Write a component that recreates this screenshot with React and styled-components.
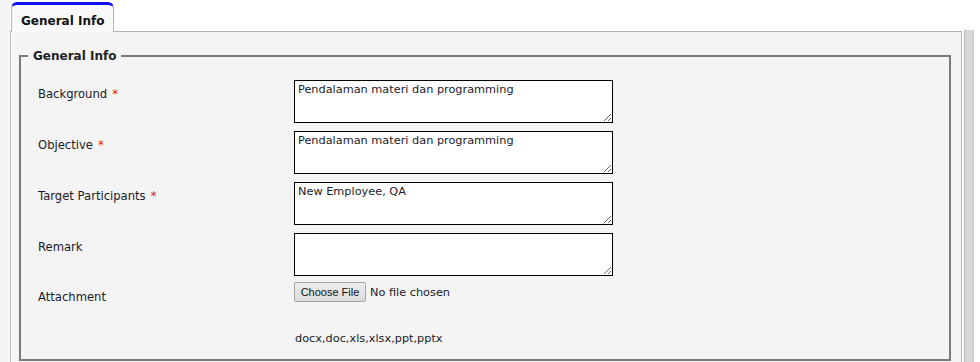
import React from "react";
import styled, { createGlobalStyle } from "styled-components";

const GlobalStyle = createGlobalStyle`
  html, body {
    margin: 0;
    padding: 0;
    background: #ffffff;
    font-family: "DejaVu Sans", Verdana, sans-serif;
    font-size: 11px;
    color: #1a1a1a;
    overflow: hidden;
  }
`;

const FIELDS = [
  { id: "bg", label: "Background", required: true, value: "Pendalaman materi dan programming" },
  { id: "obj", label: "Objective", required: true, value: "Pendalaman materi dan programming" },
  { id: "tp", label: "Target Participants", required: true, value: "New Employee, QA" },
  { id: "rm", label: "Remark", required: false, value: "" },
];

const App = () => {
  return (
    <>
      <GlobalStyle />
      <Page>
        <Gutter />
        <Main>
          <TabBar>
            <Tab $active>General Info</Tab>
          </TabBar>
          <Panel>
            <Fieldset>
              <Legend>General Info</Legend>
              <FormGrid>
                {FIELDS.map((f) => (
                  <React.Fragment key={f.id}>
                    <Label htmlFor={f.id}>
                      {f.label}
                      {f.required && <Req>*</Req>}
                    </Label>
                    <TextArea id={f.id} defaultValue={f.value} />
                  </React.Fragment>
                ))}
                <Label $file>Attachment</Label>
                <FileCell>
                  <FileRow>
                    <FileButton type="button">Choose File</FileButton>
                    <FileName>No file chosen</FileName>
                  </FileRow>
                  <Hint>docx,doc,xls,xlsx,ppt,pptx</Hint>
                </FileCell>
              </FormGrid>
            </Fieldset>
          </Panel>
        </Main>
        <Scrollbar>
          <Track />
        </Scrollbar>
      </Page>
    </>
  );
};

const Page = styled.div`
  display: flex;
  height: 362px;
  background: #ffffff;
`;

const Gutter = styled.div`
  width: 10px;
  background: #f4f4f4;
`;

const Main = styled.div`
  width: 952px;
  display: flex;
  flex-direction: column;
`;

const TabBar = styled.div`
  height: 32px;
  display: flex;
  align-items: flex-end;
  padding-left: 1px;
  border-bottom: 1px solid #b4b4b4;
  background: #ffffff;
  box-sizing: border-box;
`;

const Tab = styled.div`
  width: 103px;
  height: 30px;
  margin-bottom: -1px;
  box-sizing: border-box;
  border: 1px solid #b4b4b4;
  border-top: 3px solid #1010f0;
  border-bottom: none;
  border-radius: 6px 6px 0 0;
  background: ${(p) => (p.$active ? "#f9f9f9" : "#e8e8e8")};
  font-weight: bold;
  font-size: 12px;
  color: #111;
  padding: 9px 0 0 9px;
`;

const Panel = styled.div`
  flex: 1;
  background: #f4f4f4;
  border-left: 1px solid #c4c4c4;
  border-right: 1px solid #b4b4b4;
  padding: 17px 10px 0 8px;
`;

const Fieldset = styled.fieldset`
  margin: 0;
  border: 2px solid #7a7a7a;
  padding: 17px 0 14px 17px;
  width: 932px;
  box-sizing: border-box;
`;

const Legend = styled.legend`
  font-weight: bold;
  font-size: 12px;
  color: #222;
  padding: 0 5px;
  margin-left: -10px;
`;

const FormGrid = styled.div`
  display: grid;
  grid-template-columns: 256px 319px;
  row-gap: 8px;
`;

const Label = styled.label`
  padding-top: ${(p) => (p.$file ? "6px" : "7px")};
  font-size: 11.6px;
  color: #1a1a2a;
`;

const Req = styled.span`
  color: #e02020;
  margin-left: 5px;
`;

const TextArea = styled.textarea`
  width: 319px;
  height: 43px;
  box-sizing: border-box;
  border: 1px solid #000;
  border-radius: 0;
  padding: 2px 3px;
  font-family: "DejaVu Sans", Verdana, sans-serif;
  font-size: 11.3px;
  color: #1a1a2a;
  background: #fff;
  margin: 0;
`;

const FileCell = styled.div`
  display: flex;
  flex-direction: column;
  margin-top: -2px;
`;

const FileRow = styled.div`
  display: flex;
  align-items: center;
  gap: 4px;
`;

const FileButton = styled.button`
  height: 20px;
  width: 72px;
  padding: 0;
  border: 1px solid #a6a6a6;
  border-radius: 2px;
  background: linear-gradient(#ededed, #dcdcdc);
  font-family: "Liberation Sans", Arial, sans-serif;
  font-size: 11px;
  color: #111;
`;

const FileName = styled.span`
  font-size: 11.3px;
  color: #1a1a2a;
`;

const Hint = styled.div`
  margin-top: 30px;
  padding-left: 1px;
  font-size: 11.3px;
  color: #1a1a2a;
`;

const Scrollbar = styled.div`
  flex: 1;
  display: flex;
  padding: 30px 0 0 2px;
  background: #ffffff;
`;

const Track = styled.div`
  width: 8px;
  border-left: 1px solid #b8b8b8;
  border-right: 1px solid #c8c8c8;
  background: #d6d6d6;
`;

export default App;
